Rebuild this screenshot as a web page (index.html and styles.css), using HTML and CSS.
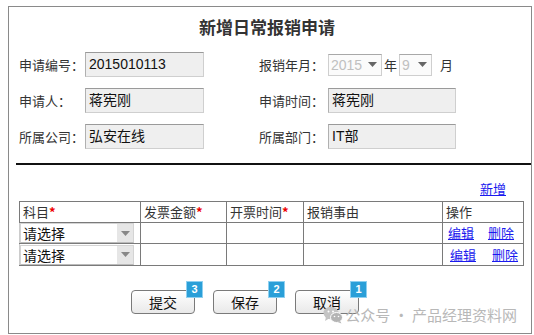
FILE: index.html
```html
<!DOCTYPE html>
<html lang="zh-CN">
<head>
    <meta charset="UTF-8">
    <meta name="viewport" content="width=device-width, initial-scale=1.0">
    <title>新增日常报销申请</title>
    <link rel="stylesheet" href="styles.css">
</head>
<body>
    <div class="frame">
        <h1 class="title">新增日常报销申请</h1>

        <div class="info">
            <div class="info-row">
                <div class="field field-l">
                    <span class="label">申请编号：</span>
                    <span class="box">2015010113</span>
                </div>
                <div class="field">
                    <span class="label label-r">报销年月：</span>
                    <span class="pick pick-year">
                        <span class="pick-val">2015</span>
                        <span class="pick-arrow"><svg width="9" height="5" viewBox="0 0 9 5"><path d="M0 0h9L4.5 5z" fill="#666"/></svg></span>
                    </span>
                    <span class="unit">年</span>
                    <span class="pick pick-month">
                        <span class="pick-val">9</span>
                        <span class="pick-arrow"><svg width="9" height="5" viewBox="0 0 9 5"><path d="M0 0h9L4.5 5z" fill="#666"/></svg></span>
                    </span>
                    <span class="unit unit-m">月</span>
                </div>
            </div>
            <div class="info-row">
                <div class="field field-l">
                    <span class="label">申请人：</span>
                    <span class="box">蒋宪刚</span>
                </div>
                <div class="field">
                    <span class="label label-r">申请时间：</span>
                    <span class="box box-wide">蒋宪刚</span>
                </div>
            </div>
            <div class="info-row">
                <div class="field field-l">
                    <span class="label">所属公司：</span>
                    <span class="box">弘安在线</span>
                </div>
                <div class="field">
                    <span class="label label-r">所属部门：</span>
                    <span class="box box-wide">IT部</span>
                </div>
            </div>
        </div>

        <div class="rule"></div>

        <div class="add-bar"><a href="#">新增</a></div>

        <table class="items">
            <colgroup>
                <col style="width:121px">
                <col style="width:86px">
                <col style="width:77px">
                <col style="width:139px">
                <col style="width:81px">
            </colgroup>
            <thead>
                <tr>
                    <th>科目<span class="req">*</span></th>
                    <th>发票金额<span class="req">*</span></th>
                    <th>开票时间<span class="req">*</span></th>
                    <th>报销事由</th>
                    <th>操作</th>
                </tr>
            </thead>
            <tbody>
                <tr>
                    <td class="cell-pick">
                        <span class="choose">请选择<span class="choose-arrow"><svg width="9" height="5" viewBox="0 0 9 5"><path d="M0 0h9L4.5 5z" fill="#888"/></svg></span></span>
                    </td>
                    <td></td>
                    <td></td>
                    <td></td>
                    <td class="ops"><a href="#">编辑</a><a href="#">删除</a></td>
                </tr>
                <tr>
                    <td class="cell-pick">
                        <span class="choose">请选择<span class="choose-arrow"><svg width="9" height="5" viewBox="0 0 9 5"><path d="M0 0h9L4.5 5z" fill="#888"/></svg></span></span>
                    </td>
                    <td></td>
                    <td></td>
                    <td></td>
                    <td class="ops ops-shift"><a href="#">编辑</a><a href="#">删除</a></td>
                </tr>
            </tbody>
        </table>

        <div class="actions">
            <button class="btn" type="button">提交<span class="badge">3</span></button>
            <button class="btn" type="button">保存<span class="badge">2</span></button>
            <button class="btn" type="button">取消<span class="badge">1</span></button>
        </div>

        <div class="watermark">
            <svg width="20" height="18" viewBox="0 0 20 18">
                <ellipse cx="8" cy="7" rx="7.5" ry="6.3" fill="#c4c4c4"/>
                <path d="M3 11l-1 4 4-2.5z" fill="#c4c4c4"/>
                <ellipse cx="13.5" cy="11.5" rx="6" ry="5" fill="#b4b4b4" stroke="#fff" stroke-width="1"/>
                <path d="M17 15l1.5 2.5-4-1.5z" fill="#b4b4b4"/>
                <circle cx="5.5" cy="5.5" r="1" fill="#fff"/>
                <circle cx="10" cy="5.5" r="1" fill="#fff"/>
                <circle cx="11.5" cy="10.5" r="0.8" fill="#fff"/>
                <circle cx="15.5" cy="10.5" r="0.8" fill="#fff"/>
            </svg>
            <span>公众号 · 产品经理资料网</span>
        </div>
    </div>
</body>
</html>
```

FILE: styles.css
```css
body {
    margin: 0;
    font-family: "Noto Sans CJK SC", sans-serif;
    font-size: 13px;
    color: #333;
    background: #fff;
}
.frame {
    position: relative;
    box-sizing: border-box;
    width: 524px;
    height: 328px;
    margin: 6px 0 0 8px;
    border: 1px solid #8a8a8a;
}
.title {
    margin: 9px 6px 0 0;
    font-size: 17px;
    line-height: 22px;
    text-align: center;
    font-weight: bold;
    color: #333;
}
.info {
    margin-top: 14px;
    padding-left: 10px;
    display: flex;
    flex-direction: column;
    gap: 11px;
}
.info-row {
    display: flex;
    height: 25px;
    align-items: center;
}
.field {
    display: flex;
    align-items: center;
}
.field-l {
    width: 240px;
}
.label {
    width: 66px;
    line-height: 18px;
}
.label-r {
    width: 69px;
}
.box {
    box-sizing: border-box;
    width: 119px;
    height: 25px;
    padding: 0 3px;
    background: #efefef;
    border: 1px solid;
    border-color: #9a9a9a #cfcfcf #cfcfcf #b0b0b0;
    line-height: 22px;
    font-family: "Liberation Sans", "Noto Sans CJK SC", sans-serif;
    font-size: 14px;
    color: #111;
}
.box-wide {
    width: 128px;
}
.pick {
    box-sizing: border-box;
    display: flex;
    height: 22px;
    border: 1px solid #cfcfcf;
    border-top-color: #a8a8a8;
    background: #fbfbfb;
}
.pick-year {
    width: 54px;
}
.pick-month {
    width: 33px;
}
.pick-val {
    flex: 1;
    padding-left: 2px;
    line-height: 20px;
    font-family: "Liberation Sans", sans-serif;
    font-size: 14px;
    color: #c0c0c0;
}
.pick-arrow {
    width: 17px;
    display: flex;
    align-items: center;
    justify-content: center;
}
.unit {
    margin: 0 2px;
}
.unit-m {
    margin-left: 8px;
}
.rule {
    height: 2px;
    margin: 14px 0 0 7px;
    background: #111;
}
.add-bar {
    margin-top: 15px;
    padding-right: 25px;
    text-align: right;
    line-height: 18px;
}
a {
    color: #1a1aee;
    font-size: 13px;
}
.items {
    margin: 3px 0 0 10px;
    width: 504px;
    table-layout: fixed;
    border-collapse: collapse;
}
.items th,
.items td {
    border: 1px solid #7a7a7a;
    padding: 0 3px;
    text-align: left;
    font-weight: normal;
    font-size: 13px;
    line-height: 18px;
    color: #333;
    white-space: nowrap;
}
.items th {
    height: 20px;
}
.items td {
    height: 19px;
}
.items tbody tr:last-child td {
    height: 21px;
}
.req {
    color: #e00;
    font-weight: bold;
}
.items td.cell-pick {
    padding: 0;
    border-left-color: #ccc;
}
.choose {
    box-sizing: border-box;
    display: flex;
    align-items: center;
    width: 114px;
    height: 20px;
    padding-left: 2px;
    border: 1px solid #d4d4d4;
    border-bottom-color: #bbb;
    background: #fff;
    color: #111;
    font-size: 14px;
    line-height: 18px;
}
.choose-arrow {
    margin-left: auto;
    width: 16px;
    height: 18px;
    display: flex;
    align-items: center;
    justify-content: center;
    background: #e6e6e6;
}
.items td.ops {
    padding-left: 5px;
}
.ops a + a {
    margin-left: 14px;
}
.items td.ops-shift {
    padding-left: 7px;
}
.ops-shift a + a {
    margin-left: 16px;
}
.actions {
    display: flex;
    gap: 18px;
    margin-top: 24px;
    padding-left: 122px;
}
.btn {
    position: relative;
    box-sizing: border-box;
    width: 64px;
    height: 24px;
    padding: 0;
    border: 1px solid #7a7a7a;
    border-radius: 4px;
    background: linear-gradient(#ffffff, #e9e9e9);
    font-family: "Noto Sans CJK SC", sans-serif;
    font-size: 14px;
    color: #111;
}
.badge {
    position: absolute;
    top: -10px;
    right: -9px;
    box-sizing: border-box;
    width: 17px;
    height: 17px;
    background: #2a9fd8;
    border: 1px solid #8fd0f0;
    color: #fff;
    font-family: "Liberation Sans", sans-serif;
    font-weight: bold;
    font-size: 11px;
    line-height: 15px;
    text-align: center;
}
.watermark {
    position: absolute;
    right: 14px;
    bottom: 8px;
    display: flex;
    align-items: center;
    gap: 2px;
    font-size: 15px;
    color: #b8b8b8;
}
```
